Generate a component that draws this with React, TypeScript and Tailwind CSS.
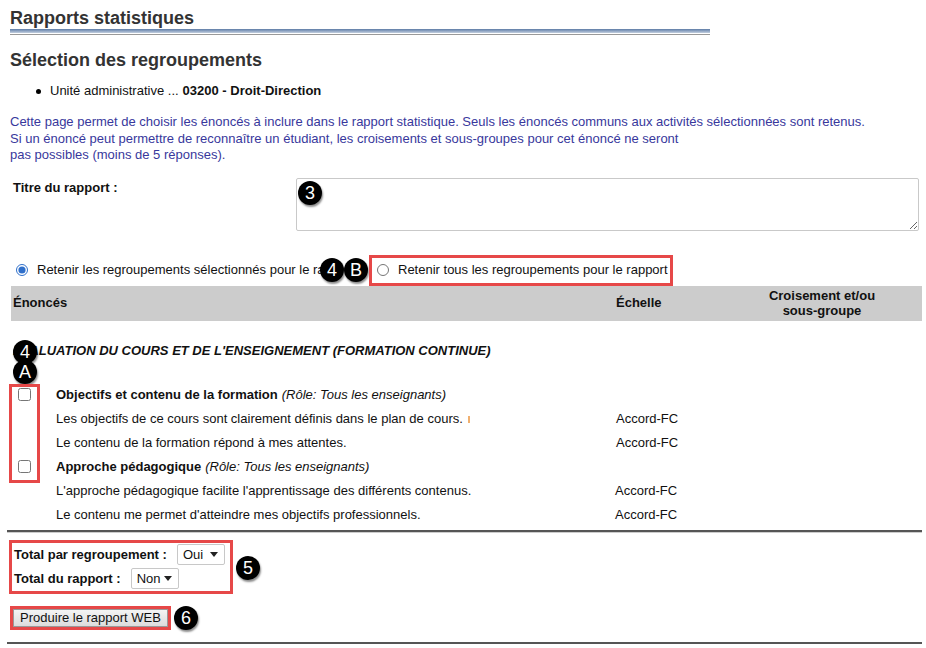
import React from 'react';

const Badge: React.FC<{ label: string; className?: string }> = ({ label, className = '' }) => (
  <span
    className={`inline-flex items-center justify-center w-[24px] h-[24px] rounded-full bg-black text-white text-[18px] leading-none font-normal not-italic shadow-[1px_2px_2px_rgba(0,0,0,0.45)] ${className}`}
  >
    {label}
  </span>
);

const Select: React.FC<{ value: string; className?: string }> = ({ value, className = '' }) => (
  <div className={`relative inline-block ${className}`}>
    <select
      defaultValue={value}
      className="appearance-none block h-[21px] w-[48px] pl-[5px] border border-[#c8c8c8] rounded-[2px] bg-white text-[13px] font-normal text-[#111] leading-[19px]"
    >
      <option>Oui</option>
      <option>Non</option>
    </select>
    <svg className="pointer-events-none absolute right-[7px] top-[8px]" width="8" height="5" viewBox="0 0 8 5">
      <path d="M0 0h8L4 5z" fill="#222" />
    </svg>
  </div>
);

const ROWS_1 = [
  'Les objectifs de ce cours sont clairement définis dans le plan de cours.',
  'Le contenu de la formation répond à mes attentes.',
];
const ROWS_2 = [
  "L'approche pédagogique facilite l'apprentissage des différents contenus.",
  "Le contenu me permet d'atteindre mes objectifs professionnels.",
];

export default function App() {
  return (
    <div className="relative w-[926px] h-[648px] overflow-hidden bg-white text-black font-['Liberation_Sans',Arial,sans-serif]">
      {/* Title */}
      <div className="pt-[8px] pl-[10px]">
        <h1 className="text-[18px] leading-[20px] font-bold text-[#333]">Rapports statistiques</h1>
        <div className="mt-[1px] w-[700px]">
          <div className="h-[4px] bg-gradient-to-b from-[#5e7ca6] to-[#c3cfdf]" />
          <div className="h-[1px] bg-white" />
          <div className="h-[1px] bg-[#999]" />
        </div>
        <h2 className="mt-[14px] text-[18px] leading-[22px] font-bold text-[#333]">Sélection des regroupements</h2>
      </div>

      {/* Unit */}
      <div className="mt-[12px] flex items-center pl-[36px] text-[13px] leading-[16px] text-[#111]">
        <span className="w-[5px] h-[5px] rounded-full bg-black mr-[9px]" />
        <span>Unité administrative ...</span>
        <span className="ml-[4px] font-bold">03200 - Droit-Direction</span>
      </div>

      {/* Description */}
      <p className="mt-[15px] pl-[10px] text-[13px] leading-[16.5px] text-[#38389c]">
        Cette page permet de choisir les énoncés à inclure dans le rapport statistique. Seuls les énoncés communs aux activités sélectionnées sont retenus.
        <br />
        Si un énoncé peut permettre de reconnaître un étudiant, les croisements et sous-groupes pour cet énoncé ne seront
        <br />
        pas possibles (moins de 5 réponses).
      </p>

      {/* Titre du rapport */}
      <div className="mt-[14px] flex">
        <label className="pl-[13px] w-[296px] text-[13px] font-bold text-[#111]">Titre du rapport :</label>
        <div className="relative">
          <textarea className="block w-[623px] h-[53px] border border-[#c9c9c9] rounded-[2px] resize" />
          <Badge label="3" className="absolute left-[2px] top-[3px]" />
        </div>
      </div>

      {/* Radios */}
      <div className="mt-[24px] flex items-center pl-[16px] h-[31px] text-[13px] text-[#111]">
        <label className="flex items-center w-[306px] overflow-hidden whitespace-nowrap">
          <input type="radio" name="ret" defaultChecked className="m-0 w-[12px] h-[12px] accent-[#2f6fca]" />
          <span className="ml-[9px]">Retenir les regroupements sélectionnés pour le rapport</span>
        </label>
        <Badge label="4" className="-ml-[2px]" />
        <Badge label="B" />
        <div className="ml-[1px] flex items-center h-[31px] w-[304px] border-[3px] border-[#e64848] pl-[5px]">
          <input type="radio" name="ret" className="m-0 w-[12px] h-[12px]" />
          <span className="ml-[9px]">Retenir tous les regroupements pour le rapport</span>
        </div>
      </div>

      {/* Table header */}
      <div className="ml-[11px] w-[911px] h-[35px] bg-[#cccccc] grid grid-cols-[603px_108px_1fr] items-center text-[13px] font-bold text-[#111]">
        <span className="pl-[2px]">Énoncés</span>
        <span className="pl-[2px]">Échelle</span>
        <span className="text-center leading-[15px]">
          Croisement et/ou
          <br />
          sous-groupe
        </span>
      </div>

      {/* Section heading */}
      <div className="relative mt-[22px] ml-[13px] text-[13px] leading-[16px] font-bold italic text-[#111]">
        ÉVALUATION DU COURS ET DE L'ENSEIGNEMENT (FORMATION CONTINUE)
        <Badge label="4" className="absolute left-0 -top-[3px]" />
        <Badge label="A" className="absolute left-0 top-[17px]" />
      </div>

      {/* Rows */}
      <div className="relative mt-[24px] text-[13px] text-[#111]">
        <div className="absolute left-[9px] top-[1px] w-[31px] h-[99px] border-[3px] border-[#e64848]" />
        <div className="flex items-center h-[24px]">
          <input type="checkbox" className="m-0 ml-[18px] w-[13px] h-[13px]" />
          <span className="ml-[25px] font-bold">Objectifs et contenu de la formation</span>
          <span className="ml-[4px] italic">(Rôle: Tous les enseignants)</span>
        </div>
        {ROWS_1.map((r, i) => (
          <div key={r} className="grid grid-cols-[616px_1fr] items-center h-[24px]">
            <span className="pl-[56px] whitespace-nowrap">
              {r}
              {i === 0 && <span className="ml-[5px] inline-block w-[2px] h-[7px] bg-[#f0b070] align-middle" />}
            </span>
            <span>Accord-FC</span>
          </div>
        ))}
        <div className="flex items-center h-[24px]">
          <input type="checkbox" className="m-0 ml-[18px] w-[13px] h-[13px]" />
          <span className="ml-[25px] font-bold">Approche pédagogique</span>
          <span className="ml-[4px] italic">(Rôle: Tous les enseignants)</span>
        </div>
        {ROWS_2.map((r) => (
          <div key={r} className="grid grid-cols-[615px_1fr] items-center h-[24px]">
            <span className="pl-[56px] whitespace-nowrap">{r}</span>
            <span>Accord-FC</span>
          </div>
        ))}
      </div>

      <div className="mt-[3px] ml-[7px] w-[915px] h-[2px] bg-[#555] shadow-[0_1px_0_#ccc]" />

      {/* Totals */}
      <div className="mt-[8px] ml-[9px] flex items-center">
        <div className="w-[224px] border-[3px] border-[#e64848] px-[2px] text-[13px] font-bold text-[#111]">
          <div className="flex items-center h-[24px]">
            <span>Total par regroupement :</span>
            <Select value="Oui" className="ml-[10px]" />
          </div>
          <div className="flex items-center h-[24px]">
            <span>Total du rapport :</span>
            <Select value="Non" className="ml-[10px]" />
          </div>
        </div>
        <Badge label="5" className="ml-[3px] mt-[2px]" />
      </div>

      {/* Button */}
      <div className="mt-[12px] ml-[10px] flex items-center">
        <div className="border-[3px] border-[#e64848]">
          <button className="block h-[18px] w-[155px] bg-gradient-to-b from-[#f4f4f4] to-[#dcdcdc] border border-[#999] text-[13px] leading-[16px] text-[#111]">
            Produire le rapport WEB
          </button>
        </div>
        <Badge label="6" className="ml-[3px]" />
      </div>

      <div className="mt-[12px] ml-[7px] w-[915px] h-[2px] bg-[#555]" />
    </div>
  );
}
